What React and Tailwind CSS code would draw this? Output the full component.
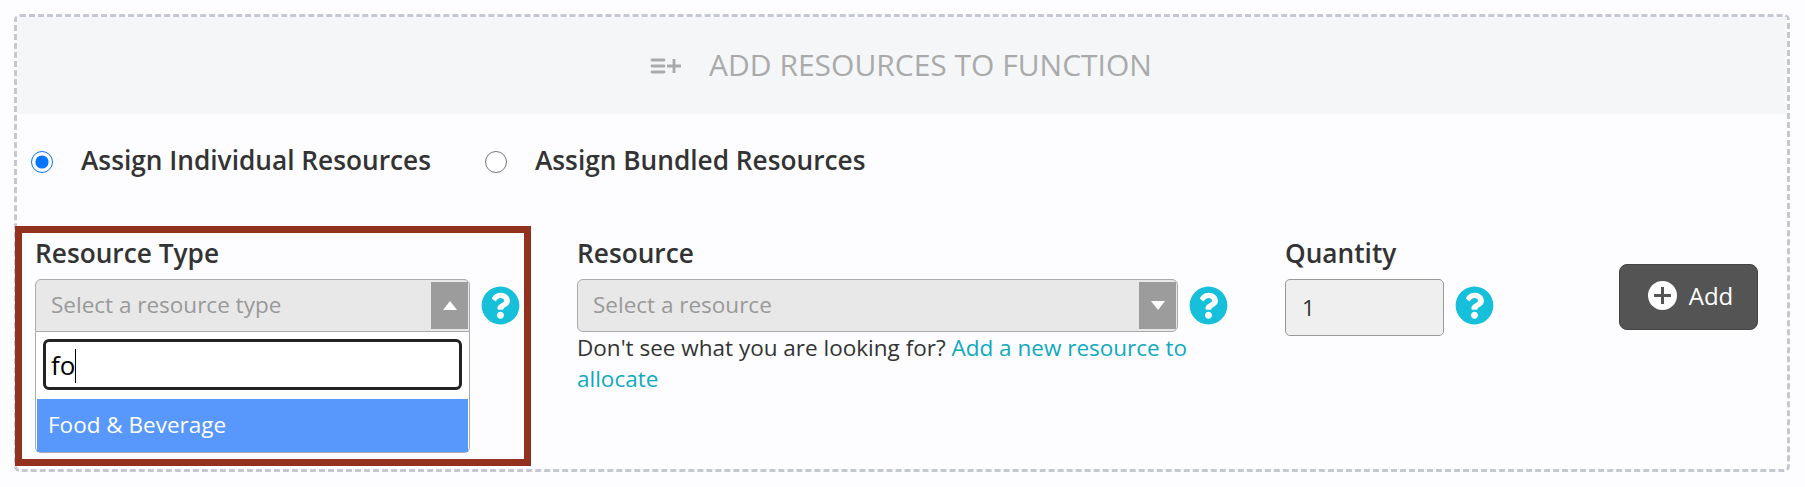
import React from 'react';
import { FaQuestionCircle } from 'react-icons/fa';

const HelpIcon = () => <FaQuestionCircle size={39} className="text-[#17c0da] shrink-0" />;

const ListPlus = () => (
    <svg width="32" height="16" viewBox="0 0 32 16" className="mr-[27px]">
        <g stroke="#aaaaaa" strokeWidth="2.8" strokeLinecap="round">
            <path d="M2 2h12M2 8h12M2 14h12" />
            <path d="M17 8h14M24 1v14" strokeLinecap="butt" />
        </g>
    </svg>
);

const PlusCircle = () => (
    <svg width="29" height="29" viewBox="0 0 29 29">
        <circle cx="14.5" cy="14.5" r="14.5" fill="#ffffff" />
        <path d="M6 14.5h17M14.5 6v17" stroke="#545454" strokeWidth="3" />
    </svg>
);

const Select = ({ width, placeholder, open }) => (
    <div
        className={`h-[53px] ${width} flex items-stretch bg-[#e8e8e8] border border-[#aaaaaa] pl-[15px] pr-px py-[2px] ${open ? 'rounded-t-[6px]' : 'rounded-[6px]'}`}
    >
        <span className="flex-1 self-center pb-[2px] text-[22.5px] leading-[30px] text-[#999999]">{placeholder}</span>
        <span className="w-[37px] bg-[#9c9c9c] flex items-center justify-center">
            {open ? (
                <span className="w-0 h-0 border-x-[7px] border-x-transparent border-b-[9px] border-b-white" />
            ) : (
                <span className="w-0 h-0 border-x-[7px] border-x-transparent border-t-[9px] border-t-white" />
            )}
        </span>
    </div>
);

export default function App() {
    return (
        <div className="w-[1805px] h-[487px] bg-[#fdfdff] pt-[14px] pl-[14px] font-['Open_Sans',sans-serif] text-[#333333] overflow-hidden">
            <div className="w-[1776px] h-[458px] border-[3px] border-dashed border-[#c5c8d3] rounded-[6px]">
                {/* Header */}
                <div className="h-[97px] bg-[#f5f6f8] flex items-center justify-center pr-[2px]">
                    <ListPlus />
                    <span className="text-[30px] text-[#aaaaaa] pb-[2px]">ADD RESOURCES TO FUNCTION</span>
                </div>

                {/* Assign type */}
                <div className="h-[96px] flex items-center pl-[14px] text-[26.25px] font-semibold">
                    <input type="radio" name="assign" defaultChecked className="w-[22px] h-[22px] m-0" />
                    <span className="ml-[28px] pb-[3px]">Assign Individual Resources</span>
                    <input type="radio" name="assign" className="w-[22px] h-[22px] m-0 ml-[54px]" />
                    <span className="ml-[28px] pb-[3px]">Assign Bundled Resources</span>
                </div>

                <div className="mt-4 flex items-start">
                    {/* Resource type */}
                    <div className="-ml-[2px] w-[516px] h-[240px] border-[7px] border-[#93311f] pl-[13px] shrink-0">
                        <div className="h-[46px] text-[26.25px] font-semibold leading-[40px]">Resource Type</div>
                        <div className="flex items-start">
                            <div className="w-[435px] shrink-0">
                                <Select width="w-full" placeholder="Select a resource type" open />
                                <div className="h-[121px] bg-white border border-t-0 border-[#aaaaaa] rounded-b-[6px] p-px">
                                    <div className="h-[66px] pt-[6px] px-[6px]">
                                        <div className="h-[51px] border-[3px] border-[#222222] rounded-[6px] bg-white flex items-center pl-[5px] pt-[2px] text-[26px] text-black">
                                            fo<span className="w-px h-[34px] bg-black" />
                                        </div>
                                    </div>
                                    <div className="h-[53px] bg-[#5897fb] text-white text-[22.5px] flex items-center pl-[11px] pb-[2px]">
                                        Food &amp; Beverage
                                    </div>
                                </div>
                            </div>
                            <div className="ml-[11px] mt-[7px]">
                                <HelpIcon />
                            </div>
                        </div>
                    </div>

                    {/* Resource */}
                    <div className="ml-[46px] w-[651px] shrink-0 pt-[7px]">
                        <div className="h-[46px] text-[26.25px] font-semibold leading-[40px]">Resource</div>
                        <div className="flex items-center gap-[11px]">
                            <Select width="w-[602px]" placeholder="Select a resource" />
                            <HelpIcon />
                        </div>
                        <p className="w-[620px] text-[22.5px] leading-[31px]">
                            Don't see what you are looking for?{' '}
                            <a href="#" className="text-[#0fa9c0]">Add a new resource to allocate</a>
                        </p>
                    </div>

                    {/* Quantity */}
                    <div className="ml-[57px] shrink-0 pt-[7px]">
                        <div className="h-[46px] text-[26.25px] font-semibold leading-[40px]">Quantity</div>
                        <div className="flex items-start gap-[11px]">
                            <div className="w-[159px] h-[57px] bg-[#efefef] border border-[#999999] rounded-[5px] pl-[16px] flex items-center text-[22.5px]">
                                1
                            </div>
                            <div className="mt-[7px]">
                                <HelpIcon />
                            </div>
                        </div>
                    </div>

                    {/* Add */}
                    <button className="ml-[125px] mt-[38px] w-[139px] h-[66px] bg-[#545454] border border-[#444444] rounded-[8px] flex items-center justify-center gap-[12px] text-white text-[24px] pb-[3px] pl-[4px]">
                        <PlusCircle />
                        Add
                    </button>
                </div>
            </div>
        </div>
    );
}
